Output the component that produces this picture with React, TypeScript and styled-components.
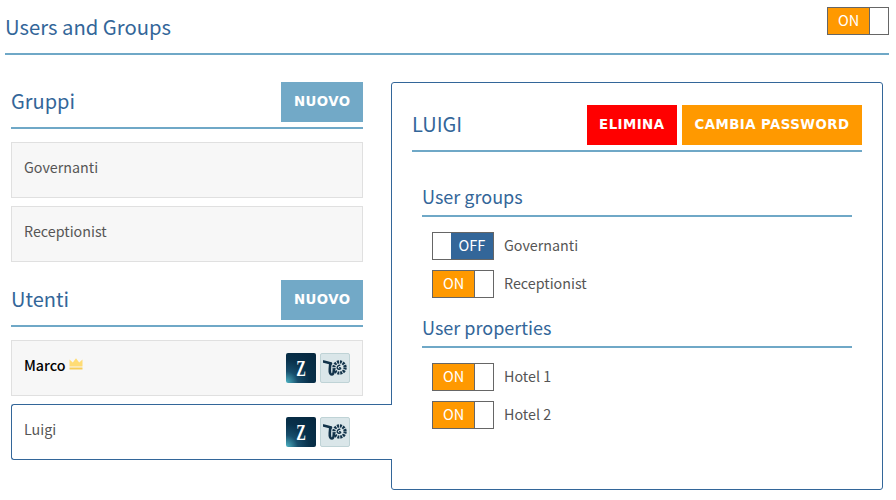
import React from 'react';
import styled, { createGlobalStyle } from 'styled-components';

const Global = createGlobalStyle`
  html, body { margin: 0; padding: 0; background: #fff; }
  body { font-family: "Noto Sans CJK SC", "Noto Sans", sans-serif; color: #555; }
`;

const Page = styled.div`
  width: 896px;
  height: 500px;
  overflow: hidden;
  box-sizing: border-box;
  padding: 7px 7px 0 5px;
`;

const TopBar = styled.header`
  display: flex;
  justify-content: space-between;
  align-items: flex-start;
  height: 46px;
  border-bottom: 2px solid #6fa8c7;
  margin-bottom: 27px;
`;

const Title = styled.h1`
  margin: 8px 0 0;
  font-size: 20.25px;
  line-height: 24px;
  font-weight: 400;
  color: #336699;
`;

const Columns = styled.div`
  display: flex;
  align-items: flex-start;
  padding-left: 6px;
`;

const Left = styled.section`
  width: 352px;
  flex: none;
  margin-right: 28px;
`;

const Head = styled.div`
  display: flex;
  justify-content: space-between;
  align-items: flex-start;
  height: 45px;
  border-bottom: 2px solid #6fa8c7;
  margin-bottom: 13px;
`;

const SectionTitle = styled.h2`
  margin: 0;
  font-size: 20px;
  line-height: 38px;
  font-weight: 400;
  color: #336699;
`;

const Button = styled.button<{ $bg: string }>`
  height: 40px;
  padding: 0 12.5px 2px;
  border: 0;
  background: ${p => p.$bg};
  color: #fff;
  font-family: "DejaVu Sans", sans-serif;
  font-weight: 700;
  font-size: 13.33px;
  letter-spacing: 0.45px;
`;

const Card = styled.div`
  box-sizing: border-box;
  height: 56px;
  margin-bottom: 8px;
  padding: 0 12px;
  display: flex;
  align-items: center;
  justify-content: space-between;
  background: #f7f7f7;
  border: 1px solid #e0e0e0;
  font-size: 14.3px;
  color: #555;
`;

const ActiveCard = styled(Card)`
  position: relative;
  z-index: 2;
  margin: 0 -29px 0 0;
  padding-right: 42px;
  background: #fff;
  border: 1px solid #336699;
  border-right: 0;
  border-radius: 3px 0 0 3px;
`;

const Group = styled.div`
  margin-bottom: 18px;
`;

const Name = styled.span<{ $admin?: boolean }>`
  display: inline-flex;
  align-items: center;
  gap: 3px;
  margin-top: -8px;
  color: ${p => (p.$admin ? '#000' : '#555')};
  font-weight: ${p => (p.$admin ? 500 : 400)};
`;

const Badges = styled.div`
  display: flex;
  gap: 4px;
`;

const ZBadge = styled.div`
  box-sizing: border-box;
  width: 30px;
  height: 30px;
  border-radius: 2px;
  display: flex;
  align-items: center;
  justify-content: center;
  background: radial-gradient(circle at 0% 100%, #4fb6c6 0%, #174d6b 28%, #08304a 55%, #05263d 100%);
  color: #fff;
  font-family: "Liberation Serif", serif;
  font-weight: 700;
  font-size: 24px;
  line-height: 1;
`;

const ZLetter = styled.span`
  display: inline-block;
  transform: scaleX(0.6);
`;

const GearBadge = styled.div`
  box-sizing: border-box;
  width: 30px;
  height: 30px;
  border-radius: 2px;
  display: flex;
  align-items: center;
  justify-content: center;
  background: #dae6e9;
  border: 1px solid #bfd3d6;
`;

const Panel = styled.section`
  box-sizing: border-box;
  flex: none;
  width: 492px;
  height: 408px;
  padding: 22px 20px 0;
  border: 1px solid #336699;
  border-radius: 3px;
  background: #fff;
`;

const PanelHead = styled.div`
  display: flex;
  justify-content: space-between;
  align-items: flex-start;
  height: 45px;
  border-bottom: 2px solid #6fa8c7;
  margin-bottom: 30px;
`;

const PanelTitle = styled.h2`
  margin: 0;
  font-size: 20px;
  line-height: 38px;
  font-weight: 400;
  color: #336699;
`;

const PanelActions = styled.div`
  display: flex;
  gap: 5px;
`;

const Sub = styled.div`
  margin: 0 10px;
`;

const SubTitle = styled.h3`
  margin: 0 0 15px;
  height: 35px;
  box-sizing: border-box;
  border-bottom: 2px solid #6fa8c7;
  font-size: 18px;
  line-height: 28px;
  font-weight: 400;
  color: #336699;
`;

const Rows = styled.div`
  display: flex;
  flex-direction: column;
  gap: 10px;
  padding-left: 10px;
  margin-bottom: 15px;
`;

const Row = styled.div`
  display: flex;
  align-items: center;
  gap: 10px;
  height: 28px;
  font-size: 14.3px;
  color: #555;
`;

const RowLabel = styled.span`
  margin-top: -4px;
`;

const SwitchBox = styled.div`
  box-sizing: border-box;
  width: 62px;
  height: 28px;
  display: flex;
  border: 1px solid #666;
  background: #fff;
`;

const SwitchFill = styled.div<{ $on: boolean }>`
  flex: 1;
  display: flex;
  align-items: center;
  justify-content: center;
  padding-bottom: 3px;
  font-size: 14.5px;
  font-weight: 400;
  color: #fff;
  background: ${p => (p.$on ? '#ff9900' : '#336699')};
`;

const SwitchKnob = styled.div<{ $on: boolean }>`
  width: ${p => (p.$on ? 19 : 18)}px;
  box-sizing: border-box;
  flex: none;
  background: #fff;
  border-left: ${p => (p.$on ? '1px solid #666' : '0')};
`;

const Switch = ({ on }: { on: boolean }) => (
  <SwitchBox>
    {!on && <SwitchKnob $on={on} />}
    <SwitchFill $on={on}>{on ? 'ON' : 'OFF'}</SwitchFill>
    {on && <SwitchKnob $on={on} />}
  </SwitchBox>
);

const Crown = () => (
  <svg width="14" height="12" viewBox="0 0 14 12" aria-hidden="true">
    <path d="M0.5 1.5 L3.8 4.5 L7 0.3 L10.2 4.5 L13.5 1.5 V8.5 H0.5 Z" fill="#ffdc75" />
    <rect x="0.5" y="9.5" width="13" height="2" fill="#f7cd58" />
  </svg>
);

const Gear = () => (
  <svg width="24" height="16" viewBox="0 0 24 16" aria-hidden="true">
    <g fill="none" stroke="#12334a" strokeLinecap="round">
      <path d="M0.5 1.5 L4.5 2.5 L8 3.5" strokeWidth="2.6" />
      <path d="M7.5 3.5 Q7 5 6.8 9 Q6.5 14.5 8.8 14.5 Q10.5 14.5 10.8 10.5" strokeWidth="2.6" />
      <circle cx="16.5" cy="7.5" r="5.6" strokeWidth="3.2" strokeDasharray="2 0.9" strokeLinecap="butt" />
      <path d="M16.6 7.6 a0.9 0.9 0 0 1 1 1.2 a2.4 2.4 0 0 1 -3.4 -0.6 a2.6 2.6 0 0 1 2.6 -3" strokeWidth="1.4" />
    </g>
  </svg>
);

const Apps = () => (
  <Badges>
    <ZBadge><ZLetter>Z</ZLetter></ZBadge>
    <GearBadge><Gear /></GearBadge>
  </Badges>
);

export default function App() {
  return (
    <Page>
      <Global />
      <TopBar>
        <Title>Users and Groups</Title>
        <Switch on />
      </TopBar>
      <Columns>
        <Left>
          <Head>
            <SectionTitle>Gruppi</SectionTitle>
            <Button $bg="#72a9c7">NUOVO</Button>
          </Head>
          <Group>
            <Card><Name>Governanti</Name></Card>
            <Card><Name>Receptionist</Name></Card>
          </Group>
          <Head>
            <SectionTitle>Utenti</SectionTitle>
            <Button $bg="#72a9c7">NUOVO</Button>
          </Head>
          <Card><Name $admin>Marco<Crown /></Name><Apps /></Card>
          <ActiveCard><Name>Luigi</Name><Apps /></ActiveCard>
        </Left>
        <Panel>
          <PanelHead>
            <PanelTitle>LUIGI</PanelTitle>
            <PanelActions>
              <Button $bg="#ff0000">ELIMINA</Button>
              <Button $bg="#ff9900">CAMBIA PASSWORD</Button>
            </PanelActions>
          </PanelHead>
          <Sub>
            <SubTitle>User groups</SubTitle>
            <Rows>
              <Row><Switch on={false} /><RowLabel>Governanti</RowLabel></Row>
              <Row><Switch on /><RowLabel>Receptionist</RowLabel></Row>
            </Rows>
            <SubTitle>User properties</SubTitle>
            <Rows>
              <Row><Switch on /><RowLabel>Hotel 1</RowLabel></Row>
              <Row><Switch on /><RowLabel>Hotel 2</RowLabel></Row>
            </Rows>
          </Sub>
        </Panel>
      </Columns>
    </Page>
  );
}
